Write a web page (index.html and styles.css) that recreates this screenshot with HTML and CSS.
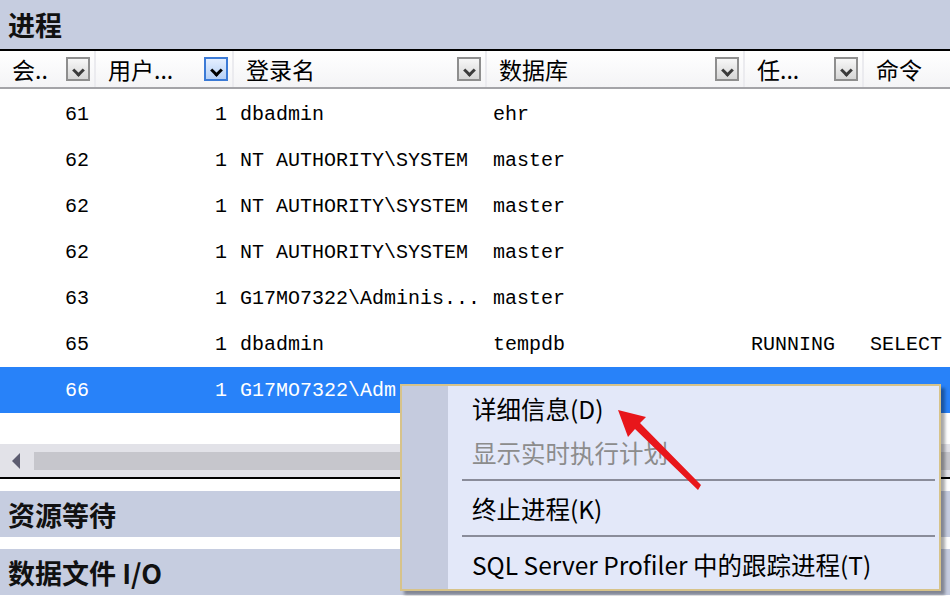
FILE: index.html
```html
<!DOCTYPE html>
<html>
    <head>
        <title>活动监视器 - 进程</title>
        <link rel="stylesheet" href="styles.css">
    </head>
    <body>
        <div class="monitor">
            <div class="section-title open">进程</div>

            <div class="grid">
                <div class="grid-head">
                    <div class="head-cell"><span>会..</span><i class="filter"></i></div>
                    <div class="head-cell"><span>用户...</span><i class="filter active"></i></div>
                    <div class="head-cell"><span>登录名</span><i class="filter"></i></div>
                    <div class="head-cell"><span>数据库</span><i class="filter"></i></div>
                    <div class="head-cell"><span>任...</span><i class="filter"></i></div>
                    <div class="head-cell last"><span>命令</span></div>
                </div>

                <div class="grid-body">
                    <div class="row"><span class="num">61</span><span class="num">1</span><span>dbadmin</span><span>ehr</span><span></span><span></span></div>
                    <div class="row"><span class="num">62</span><span class="num">1</span><span>NT AUTHORITY\SYSTEM</span><span>master</span><span></span><span></span></div>
                    <div class="row"><span class="num">62</span><span class="num">1</span><span>NT AUTHORITY\SYSTEM</span><span>master</span><span></span><span></span></div>
                    <div class="row"><span class="num">62</span><span class="num">1</span><span>NT AUTHORITY\SYSTEM</span><span>master</span><span></span><span></span></div>
                    <div class="row"><span class="num">63</span><span class="num">1</span><span>G17MO7322\Adminis...</span><span>master</span><span></span><span></span></div>
                    <div class="row"><span class="num">65</span><span class="num">1</span><span>dbadmin</span><span>tempdb</span><span>RUNNING</span><span>SELECT</span></div>
                    <div class="row selected"><span class="num">66</span><span class="num">1</span><span>G17MO7322\Adm</span><span></span><span></span><span></span></div>
                </div>

                <div class="hscroll">
                    <svg class="scroll-arrow" width="12" height="18" viewBox="0 0 12 18">
                        <polygon points="10,1 2,9 10,17" fill="#5c5c70"/>
                    </svg>
                    <div class="scroll-thumb"></div>
                </div>
            </div>

            <div class="section-title">资源等待</div>
            <div class="section-title">数据文件 I/O</div>
        </div>

        <!-- right-click menu over the selected row -->
        <div class="context-menu">
            <div class="menu-gutter"></div>
            <div class="menu-items">
                <div class="menu-item">详细信息(D)</div>
                <div class="menu-item disabled">显示实时执行计划</div>
                <div class="menu-sep"></div>
                <div class="menu-item">终止进程(K)</div>
                <div class="menu-sep"></div>
                <div class="menu-item">SQL Server Profiler 中的跟踪进程(T)</div>
            </div>
        </div>

        <svg class="pointer-arrow" width="950" height="596" viewBox="0 0 950 596">
            <polygon points="618,410 646,417 640,423 701,485 698,490 635,429 628,437" fill="#e8161b"/>
        </svg>
    </body>
</html>
```

FILE: styles.css
```css
/* Activity monitor panel, process grid and context menu */
body {
    margin: 0;
    width: 950px;
    height: 596px;
    overflow: hidden;
    background-color: #ffffff;
    font-family: "Noto Sans CJK SC", "Noto Sans", sans-serif;
    position: relative;
}

.monitor {
    display: flex;
    flex-direction: column;
}

.section-title {
    height: 46px;
    display: flex;
    align-items: center;
    padding-left: 8px;
    background-color: #c6cde0;
    color: #111111;
    font-size: 27px;
    font-weight: bold;
    margin-top: 12px;
}

.section-title.open {
    height: 49px;
    margin-top: 0;
    border-bottom: 2px solid #000000;
}

/* header row with filter buttons */
.grid-head {
    display: grid;
    grid-template-columns: 96px 138px 253px 258px 119px 1fr;
    height: 36px;
    background: linear-gradient(#ffffff, #f4f4f6);
    border-bottom: 2px solid #a4a4a8;
}

.head-cell {
    display: flex;
    align-items: center;
    justify-content: space-between;
    padding: 0 4px 0 12px;
    border-right: 2px solid #ebebef;
    font-size: 23px;
    color: #000000;
}

.head-cell.last {
    border-right: none;
}

.filter {
    width: 20px;
    height: 20px;
    border: 2px solid #8e8e8e;
    background: linear-gradient(#f7f7f7, #d6d6d6);
    position: relative;
}

.filter::after {
    content: "";
    position: absolute;
    left: 6px;
    top: 7px;
    width: 6px;
    height: 6px;
    border-right: 3px solid #3a3a3a;
    border-bottom: 3px solid #3a3a3a;
    transform: rotate(45deg);
}

.filter.active {
    border-color: #3b7ad6;
    background: linear-gradient(#e4efff, #b6d0f6);
}

.filter.active::after {
    border-color: #000000;
}

/* process rows */
.grid-body {
    margin-top: 2px;
}

.row {
    display: grid;
    grid-template-columns: 96px 138px 253px 258px 119px 1fr;
    height: 46px;
    align-items: center;
    font-family: "Liberation Mono", "DejaVu Sans Mono", monospace;
    font-size: 20px;
    color: #000000;
    white-space: nowrap;
}

.row span {
    padding-left: 6px;
    overflow: hidden;
}

.row .num {
    text-align: right;
    padding-right: 7px;
}

.row.selected {
    background-color: #2882f9;
    color: #ffffff;
}

/* horizontal scroll bar */
.hscroll {
    margin-top: 31px;
    height: 33px;
    background-color: #e2e2e8;
    display: flex;
    align-items: center;
    border-bottom: 2px solid #000000;
}

.scroll-arrow {
    margin-left: 10px;
}

.scroll-thumb {
    margin-left: 12px;
    flex: 1;
    height: 18px;
    background-color: #c6c6cc;
}

/* context menu */
.context-menu {
    position: absolute;
    left: 400px;
    top: 384px;
    width: 537px;
    height: 203px;
    display: flex;
    background-color: #e3e8f9;
    border: 2px solid #d7c38a;
    box-shadow: 4px 4px 3px rgba(0, 0, 0, 0.35);
}

.menu-gutter {
    width: 46px;
    background-color: #c5cbde;
}

.menu-items {
    flex: 1;
}

.menu-item {
    height: 44px;
    display: flex;
    align-items: center;
    padding-left: 24px;
    font-size: 24.5px;
    color: #000000;
    white-space: nowrap;
}

.menu-item.disabled {
    color: #8c8c8c;
}

.menu-sep {
    height: 12px;
    margin: 0 4px 0 14px;
    background: linear-gradient(transparent 5px, #8a8c9a 5px, #8a8c9a 7px, transparent 7px);
}

.pointer-arrow {
    position: absolute;
    left: 0;
    top: 0;
    pointer-events: none;
}
```
